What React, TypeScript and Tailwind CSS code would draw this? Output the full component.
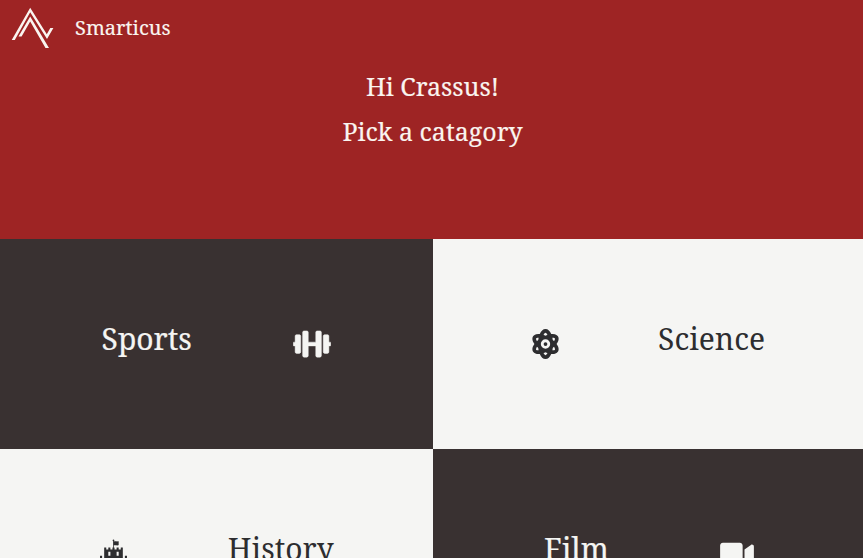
import React from "react";
import { FaAtom, FaDumbbell, FaFortAwesome, FaVideo } from "react-icons/fa";

function Logo() {
  return (
    <svg viewBox="0 0 44 42" className="h-[42px] w-[44px]" fill="currentColor">
      <path d="M0.7 33 L19.2 0.8 L35.8 27.3 L39.3 21 H42.4 L36 32 L19.2 5.2 L3.8 33Z" />
      <path d="M7.5 29.5 L19.2 9.4 L38 41 H34.5 L19.2 14.6 L10.6 29.5Z" />
    </svg>
  );
}

const dark = "bg-[#393131] text-[#f5f5f3] [-webkit-text-stroke:0.2px]";
const light = "bg-[#f5f5f3] text-[#2d2d2f]";

export default function App() {
  return (
    <div className="flex h-[558px] w-full flex-col overflow-hidden bg-[#9e2424] text-[#faf5f0] font-['Noto_Serif','DejaVu_Serif',serif]">
      <header className="h-[239px] shrink-0 [-webkit-text-stroke:0.15px]">
        <div className="flex h-14 items-center gap-[20px] pl-[11px]">
          <Logo />
          <span className="text-[20px] leading-[30px]">Smarticus</span>
        </div>
        <div className="flex flex-col items-center pt-2 pl-[2px] text-[25px] leading-[45px]">
          <h1>Hi Crassus!</h1>
          <h2>Pick a catagory</h2>
        </div>
      </header>
      <main className="grid shrink-0 grid-cols-[433px_1fr] auto-rows-[210px] text-[30px] leading-[45px]">
        <button className={`flex items-center justify-evenly pb-[12px] ${dark}`}>
          <span>Sports</span>
          <FaDumbbell strokeWidth={8} className="mt-[12px] h-[30px] w-[38px]" />
        </button>
        <button className={`flex items-center justify-evenly pb-[12px] pl-[1px] ${light}`}>
          <FaAtom className="mt-[12px] h-[30px] w-[27px]" />
          <span className="ml-[1px]">Science</span>
        </button>
        <button className={`flex items-center justify-evenly pb-[12px] ${light}`}>
          <FaFortAwesome className="mt-[12px] h-[30px] w-[29px]" />
          <span>History</span>
        </button>
        <button className={`flex items-center justify-evenly pb-[12px] pl-[2px] ${dark}`}>
          <span>Film</span>
          <FaVideo className="mt-[12px] ml-[2px] h-[30px] w-[34px]" />
        </button>
      </main>
    </div>
  );
}
